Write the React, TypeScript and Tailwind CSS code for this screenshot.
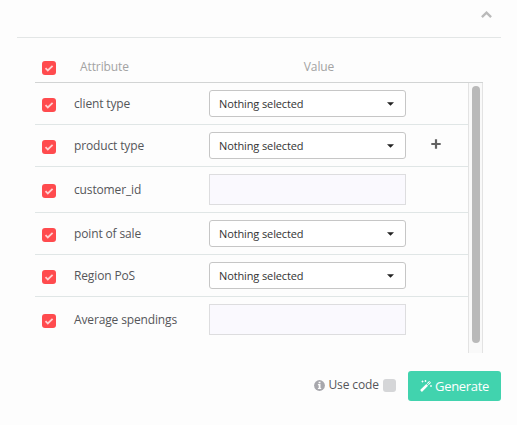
import React from "react";

type Row = { label: string; kind: "select" | "input"; add?: boolean };

const rows: Row[] = [
  { label: "client type", kind: "select" },
  { label: "product type", kind: "select", add: true },
  { label: "customer_id", kind: "input" },
  { label: "point of sale", kind: "select" },
  { label: "Region PoS", kind: "select" },
  { label: "Average spendings", kind: "input" },
];

function Check() {
  return (
    <span className="flex h-3.5 w-3.5 shrink-0 items-center justify-center rounded-[3px] bg-[#ff4b4e]">
      <svg viewBox="0 0 14 14" className="h-3.5 w-3.5" fill="none" stroke="#ffd2d2" strokeWidth="1.8">
        <path d="M3.5 7.2 L5.8 9.4 L10.6 4.8" />
      </svg>
    </span>
  );
}

function Select() {
  return (
    <button className="flex h-[27px] w-[197px] items-center justify-between rounded-[3px] border border-[#c6c6c6] bg-white pr-[11px] pl-[9px] text-[11px] leading-4 tracking-[-0.12px] text-[#333]">
      <span>Nothing selected</span>
      <svg viewBox="0 0 7 4" className="h-1 w-[7px]" fill="#222">
        <path d="M0 0.3H7L3.5 3.8Z" />
      </svg>
    </button>
  );
}

function Wand() {
  return (
    <svg viewBox="0 0 12 12" className="h-3 w-3 shrink-0" fill="none" stroke="white">
      <path d="M1 11 L7.2 4.8" strokeWidth="2.5" />
      <path d="M7.8 4.2 L10.1 1.9" strokeWidth="2.5" />
      <path d="M7.6 4.4 L9.9 2.1" stroke="#41d3ae" strokeWidth="0.8" />
      <path d="M2.5 0.5V2.5M1.5 1.5H3.5M5.5 0V2M4.5 1H6.5M11 5V7M10 6H12" strokeWidth="0.8" />
    </svg>
  );
}

export default function App() {
  return (
    <div className="h-[425px] w-[517px] bg-[#fdfdfd] pr-4 pl-[17px] font-['Open_Sans','Noto_Sans',sans-serif] text-xs tracking-[-0.14px] text-[#55565a]">
      <div className="flex h-[38px] justify-end border-b border-[#e3e6e6] pt-[11px] pr-[9px]">
        <svg viewBox="0 0 11 7" className="h-[7px] w-[11px]" fill="none" stroke="#bababa" strokeWidth="2.3">
          <path d="M0.9 6.1 L5.5 1.6 L10.1 6.1" />
        </svg>
      </div>

      <div className="mt-[14px] ml-[18px] w-[448px]">
        <div className="flex h-[31px] items-start border-b border-[#d2d4d4] pl-[7px] text-[#a3a3a3]">
          <div className="w-[38px] pt-[9px]"><Check /></div>
          <div className="w-[129px] pt-[7px] leading-4 tracking-[-0.1px]">Attribute</div>
          <div className="w-[220px] pt-[7px] text-center leading-4 tracking-[-0.1px]">Value</div>
        </div>

        <div className="flex h-[270px]">
          <div className="w-[433px]">
            {rows.map((row) => (
              <div
                key={row.label}
                className={`flex items-center border-b border-[#e0e6e6] pl-[7px] last:border-transparent ${row.kind === "select" ? "h-[42px]" : "h-[46px]"}`}
              >
                <div className="w-8 pt-[3px]"><Check /></div>
                <div className="w-[135px] leading-4">{row.label}</div>
                {row.kind === "select" ? (
                  <Select />
                ) : (
                  <input className="h-[31px] w-[197px] border border-[#dddddf] bg-[#faf9fe]" />
                )}
                {row.add && (
                  <svg viewBox="0 0 10 10" className="mb-1 ml-[25px] h-2.5 w-2.5" stroke="#626262" strokeWidth="2.2">
                    <path d="M5 0.3V9.7M0.3 5H9.7" />
                  </svg>
                )}
              </div>
            ))}
          </div>
          <div className="flex w-[15px] justify-center border-x border-[#e3e3e3] bg-[#f9f9f9] pt-[3px]">
            <div className="h-[257px] w-2 rounded-full bg-[#b9b9b9]" />
          </div>
        </div>
      </div>

      <div className="mt-[18px] flex h-[30px] items-center justify-end">
        <svg viewBox="0 0 11 11" className="mb-px h-[11px] w-[11px]">
          <circle cx="5.5" cy="5.5" r="5.4" fill="#a7a7ac" />
          <path d="M4.6 1.7H6.5V3.2H4.6ZM3.9 4.1H6.5V7.9H7.2V9.1H3.9V7.9H4.7V5.3H3.9Z" fill="#fdfdfd" />
        </svg>
        <span className="ml-[3px] pb-[2px] leading-4 tracking-[-0.1px]">Use code</span>
        <span className="mb-px ml-1 h-[13px] w-[13px] rounded-[3px] bg-[#d5d6d8]" />
        <button className="ml-3 flex h-[30px] w-[93px] items-center rounded-[3px] bg-[#41d3ae] pl-3 text-[13px] leading-4 tracking-[-0.3px] text-white">
          <Wand />
          <span className="ml-[3px] pb-px">Generate</span>
        </button>
      </div>
    </div>
  );
}
